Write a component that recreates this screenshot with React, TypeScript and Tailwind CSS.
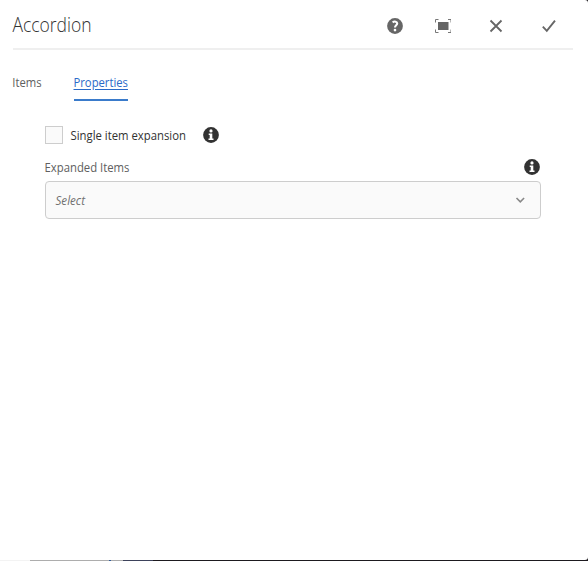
import React from 'react';

function InfoIcon() {
  return (
    <svg className="block h-4 w-4" viewBox="0 0 16 16">
      <circle cx="8" cy="8" r="7.9" fill="#323232" />
      <circle cx="8" cy="3.900" r="1.6" fill="#fff" />
      <path d="M5.700 6.400h3.600v5h1.200V13h-5v-1.600h1.200V8h-1z" fill="#fff" />
    </svg>
  );
}

function HelpIcon() {
  return (
    <svg className="block h-4 w-4" viewBox="0 0 16 16">
      <circle cx="8" cy="8" r="7.9" fill="#666" />
      <path d="M5.600 4.300C7.500 3 10.200 3.500 10.200 5.500c0 1.800-2.200 1.900-2.200 4" fill="none" stroke="#fff" strokeWidth="2.1" />
      <circle cx="8" cy="12.100" r="1.350" fill="#fff" />
    </svg>
  );
}

export default function App() {
  return (
    <div className="flex h-[561px] w-[588px] flex-col bg-[#1d1a1f] font-['Open_Sans','Noto_Sans',sans-serif] text-[#323232]">
      <main className="h-[560px] rounded-tr-[3px] rounded-br-[3px] bg-white">
        <header className="ml-[13px] flex h-[50px] w-[560px] items-center border-b-2 border-[#efefef] pt-1">
          <h1 className="-ml-px w-[375px] whitespace-nowrap pb-0.5 text-[20px] font-[350] leading-6">
            <span className="inline-block origin-left translate-x-[0.4px] scale-x-[0.875]">Accordion</span>
          </h1>
          <button className="w-4" aria-label="Help"><HelpIcon /></button>
          <button className="ml-8 w-4" aria-label="Fullscreen">
            <svg className="block h-4 w-4" viewBox="0 0 16 16">
              <path d="M3 4h10.500v8H3z" fill="#666" />
              <path d="M.5 4.500v-3h3M13 1.500h3v3M.5 11.500v3h3M13 14.500h3v-3" fill="none" stroke="#777" />
            </svg>
          </button>
          <button className="ml-[37px] w-4" aria-label="Cancel">
            <svg className="block h-4 w-4" viewBox="0 0 16 16">
              <path d="m2.500 2.500 11 11m0-11-11 11" fill="none" stroke="#666" strokeWidth="1.8" />
            </svg>
          </button>
          <button className="ml-[37px] w-4" aria-label="Done">
            <svg className="block h-4 w-4" viewBox="0 0 16 16">
              <path d="m1.800 8.700 4 4.100L14 2.700" fill="none" stroke="#666" strokeWidth="1.9" />
            </svg>
          </button>
        </header>
        <nav className="ml-3 flex h-[51px] whitespace-nowrap pt-[23px] text-[12.500px] leading-5 text-[#606060]">
          <div className="w-[62px]"><span className="inline-block origin-left translate-x-[0.3px] scale-x-[0.9]">Items</span></div>
          <div className="h-7 w-[54px] border-b-2 border-[#3a7bcb] text-[#2a6ac8]">
            <span className="-ml-px inline-block origin-left translate-x-[0.5px] scale-x-[0.9] underline underline-offset-2">Properties</span>
          </div>
        </nav>
        <section className="ml-[45px] w-[496px] pt-6 text-[12.500px]">
          <div className="flex h-5 items-center whitespace-nowrap">
            <span className="h-[18px] w-[18px] border border-[#cdcdcd] bg-[#fafafa]" />
            <label className="ml-[7px] w-[133px] pt-0.5 leading-5">
              <span className="inline-block origin-left translate-x-[0.5px] scale-x-[0.906]">Single item expansion</span>
            </label>
            <InfoIcon />
          </div>
          <div className="mt-3 flex h-5 items-center justify-between text-[#606060]">
            <label className="-ml-px pt-0.5 leading-5"><span className="inline-block origin-left translate-x-[0.5px] scale-x-[0.906]">Expanded Items</span></label>
            <span className="mr-[1.500px]"><InfoIcon /></span>
          </div>
          <button className="mt-1 flex h-[38px] w-full items-center justify-between rounded-[4px] border border-[#cdcdcd] bg-[#fafafa] pl-[9px] pr-[15px] italic text-[#707070]">
            <span className="inline-block origin-left translate-x-[0.5px] scale-x-[0.93] pt-0.5">Select</span>
            <svg className="h-[10px] w-[10px]" viewBox="0 0 10 10">
              <path d="m1.500 3 3.800 3.800L9.100 3" fill="none" stroke="#888" strokeWidth="1.600" />
            </svg>
          </button>
        </section>
      </main>
      <div className="flex h-px">
        <span className="w-[30px] bg-[#f3f3f3]" />
        <span className="w-[79px] bg-[#adadad]" />
        <span className="w-[2px] bg-[#315b99]" />
        <span className="w-3 bg-[#adadad]" />
        <span className="w-[30px] bg-[#3d425b]" />
        <span className="flex-1 bg-[#1d1a1f]" />
      </div>
    </div>
  );
}
